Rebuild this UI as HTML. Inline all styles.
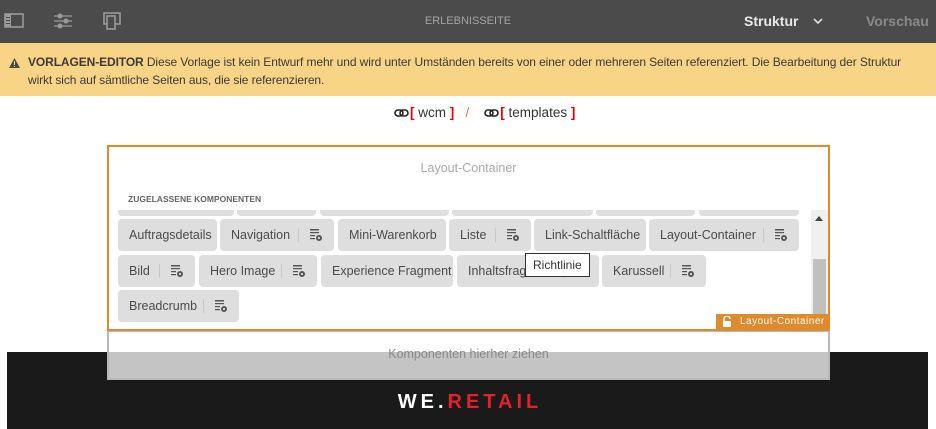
<!DOCTYPE html>
<html><head><meta charset="utf-8"><style>
*{margin:0;padding:0;box-sizing:border-box}
body{width:936px;height:429px;overflow:hidden;background:#fff;font-family:"Liberation Sans",sans-serif;position:relative}
.a{position:absolute}
.chip{position:absolute;height:32px;background:#dedede;border-radius:4px;font-size:12.5px;color:#4b4b4b;line-height:32px;padding-left:11px;white-space:nowrap}
.chip .sep{position:absolute;top:9px;width:1px;height:14px;background:#c8c8c8}
.chip svg{position:absolute;top:10px}
.lk{display:inline-block;vertical-align:middle;margin-right:1px}
</style></head><body>
<div class="a" style="left:0;top:0;width:936px;height:43px;background:#4b4b4b"></div>
<svg class="a" style="left:4px;top:13px" width="20" height="16" viewBox="0 0 20 16"><rect x="1" y="1" width="18" height="13" fill="none" stroke="#9a9a9a" stroke-width="1.6"/><rect x="1" y="1" width="6" height="13" fill="#9a9a9a"/><rect x="2" y="4" width="4" height="1" fill="#4b4b4b"/><rect x="2" y="7" width="4" height="1" fill="#4b4b4b"/><rect x="2" y="10" width="4" height="1" fill="#4b4b4b"/></svg>
<svg class="a" style="left:53px;top:13px" width="20" height="16" viewBox="0 0 20 16"><g stroke="#9a9a9a" stroke-width="1.3"><line x1="1" y1="3" x2="19" y2="3"/><line x1="1" y1="8" x2="19" y2="8"/><line x1="1" y1="13" x2="19" y2="13"/></g><g fill="#9a9a9a"><circle cx="7" cy="3" r="2.5"/><circle cx="13" cy="8" r="2.5"/><circle cx="7" cy="13" r="2.5"/></g></svg>
<svg class="a" style="left:103px;top:12px" width="18" height="18" viewBox="0 0 18 18"><rect x="1" y="1" width="16" height="11" fill="none" stroke="#9a9a9a" stroke-width="1.6"/><rect x="4" y="4" width="8" height="13" fill="#4b4b4b" stroke="#9a9a9a" stroke-width="1.6"/></svg>
<div class="a" style="left:0;top:15px;width:936px;text-align:center;font-size:11px;color:#a5a5a5">ERLEBNISSEITE</div>
<div class="a" style="left:744px;top:13px;font-size:14px;font-weight:bold;color:#e8e8e8">Struktur</div>
<svg class="a" style="left:813px;top:18px" width="10" height="6" viewBox="0 0 10 6"><path d="M1 1L5 5L9 1" fill="none" stroke="#ddd" stroke-width="1.6"/></svg>
<div class="a" style="left:866px;top:13px;font-size:14px;font-weight:bold;color:#8a8a8a">Vorschau</div>
<div class="a" style="left:0;top:43px;width:936px;height:53px;background:#f8d586"></div>
<svg class="a" style="left:9px;top:58px" width="11" height="10" viewBox="0 0 11 10"><path d="M5.5 0L11 10H0Z" fill="#4b4b4b"/><rect x="5" y="3" width="1" height="4" fill="#f8d586"/><rect x="5" y="8" width="1" height="1" fill="#f8d586"/></svg>
<div class="a" style="left:28px;top:53px;width:882px;font-size:12px;letter-spacing:-0.1px;line-height:18px;color:#3a3a3a"><b>VORLAGEN-EDITOR</b> Diese Vorlage ist kein Entwurf mehr und wird unter Umständen bereits von einer oder mehreren Seiten referenziert. Die Bearbeitung der Struktur wirkt sich auf sämtliche Seiten aus, die sie referenzieren.</div>
<div class="a" style="left:394px;top:105px;font-size:13.5px;color:#333;white-space:nowrap"><svg class="lk" width="15" height="8" viewBox="0 0 15 8"><rect x="1" y="1" width="8" height="6" rx="3" fill="none" stroke="#222" stroke-width="1.6"/><rect x="6" y="1" width="8" height="6" rx="3" fill="none" stroke="#222" stroke-width="1.6"/></svg><span style="color:#e00;font-weight:bold">[</span> wcm <span style="color:#e00;font-weight:bold">]</span> &nbsp; <span style="color:#e66">/</span> &nbsp;&nbsp; <svg class="lk" width="15" height="8" viewBox="0 0 15 8"><rect x="1" y="1" width="8" height="6" rx="3" fill="none" stroke="#222" stroke-width="1.6"/><rect x="6" y="1" width="8" height="6" rx="3" fill="none" stroke="#222" stroke-width="1.6"/></svg><span style="color:#e00;font-weight:bold">[</span> templates <span style="color:#e00;font-weight:bold">]</span></div>
<div class="a" style="left:7px;top:352px;width:921px;height:77px;background:#1a1a1a"></div>
<div class="a" style="left:0;top:391px;width:936px;text-align:center;font-size:20px;font-weight:bold;letter-spacing:4px;color:#fff;padding-left:4px">WE.<span style="color:#e3202b">RETAIL</span></div>
<div class="a" style="left:107px;top:330px;width:723px;height:50px;background:#c4c4c4;border:2px solid #b8b8b8"></div>
<div class="a" style="left:109px;top:332px;width:719px;height:20px;background:#fff"></div>
<div class="a" style="left:107px;top:347px;width:723px;text-align:center;font-size:12.5px;color:#8a8a8a">Komponenten hierher ziehen</div>
<div class="a" style="left:107px;top:145px;width:723px;height:186px;border:2px solid #e08a2e;background:#fff"></div>
<div class="a" style="left:107px;top:161px;width:723px;text-align:center;font-size:12.5px;color:#aaa">Layout-Container</div>
<div class="a" style="left:128px;top:194px;font-size:8.5px;font-weight:bold;color:#666">ZUGELASSENE KOMPONENTEN</div>
<div class="a" style="left:811px;top:210px;width:17px;height:118px;background:#f0f0f0"></div>
<div class="a" style="left:813px;top:259px;width:13px;height:69px;background:#c0c0c0"></div>
<svg class="a" style="left:815px;top:216px" width="8" height="5"><path d="M0 5L4 0L8 5Z" fill="#444"/></svg>
<div class="a" style="left:716px;top:314px;width:114px;height:16px;background:#e08a2e;color:#fff;font-size:10px;line-height:16px;padding-left:24px;letter-spacing:.5px">Layout-Container</div>
<svg class="a" style="left:722px;top:316px" width="10" height="11" viewBox="0 0 10 11"><path d="M2 5V3a3 3 0 0 1 6 0" fill="none" stroke="#fff" stroke-width="1.5"/><rect x="1" y="5" width="8" height="6" fill="#fff"/></svg>
<div class="a" style="left:109px;top:210px;width:702px;height:118px;overflow:hidden">
<div class="chip" style="left:9px;top:-26px;width:116px"></div><div class="chip" style="left:128px;top:-26px;width:79px"></div><div class="chip" style="left:211px;top:-26px;width:129px"></div><div class="chip" style="left:343px;top:-26px;width:141px"></div><div class="chip" style="left:487px;top:-26px;width:99px"></div><div class="chip" style="left:590px;top:-26px;width:100px"></div>
</div>
<div id="chips"></div>
<script>
var ic='<svg width="12" height="12" viewBox="0 0 12 12"><g fill="#555"><rect x="0" y="0" width="9" height="1.5"/><rect x="0" y="3" width="9" height="1.2"/><rect x="0" y="6" width="5" height="1.2"/><rect x="0" y="9" width="5" height="1.2"/><circle cx="9" cy="9" r="3"/></g><circle cx="9" cy="9" r="1.1" fill="#dedede"/></svg>';
var c=[["Auftragsdetails",118,219,99],["Navigation",220,219,114,1],["Mini-Warenkorb",338,219,108],["Liste",449,219,82,1],["Link-Schaltfläche",534,219,112],["Layout-Container",649,219,150,1],
["Bild",118,255,77,1],["Hero Image",199,255,118,1],["Experience Fragment",321,255,132],["Inhaltsfragment",457,255,142,1],["Karussell",602,255,104,1],["Breadcrumb",118,290,121,1]];
var h='';c.forEach(function(k){var s='';if(k[4]){s='<span class="sep" style="left:'+(k[3]-36)+'px"></span><svg style="left:'+(k[3]-24)+'px" width="12" height="12">'+ic.slice(ic.indexOf('>')+1);}
h+='<div class="chip" style="left:'+k[1]+'px;top:'+k[2]+'px;width:'+k[3]+'px">'+k[0]+s+'</div>';});
document.getElementById('chips').innerHTML=h;
</script>
<div class="a" style="left:525px;top:253px;width:65px;height:24px;background:#fff;border:1px solid #333;font-size:12px;line-height:22px;padding-left:7px;color:#333">Richtlinie</div>
</body></html>
